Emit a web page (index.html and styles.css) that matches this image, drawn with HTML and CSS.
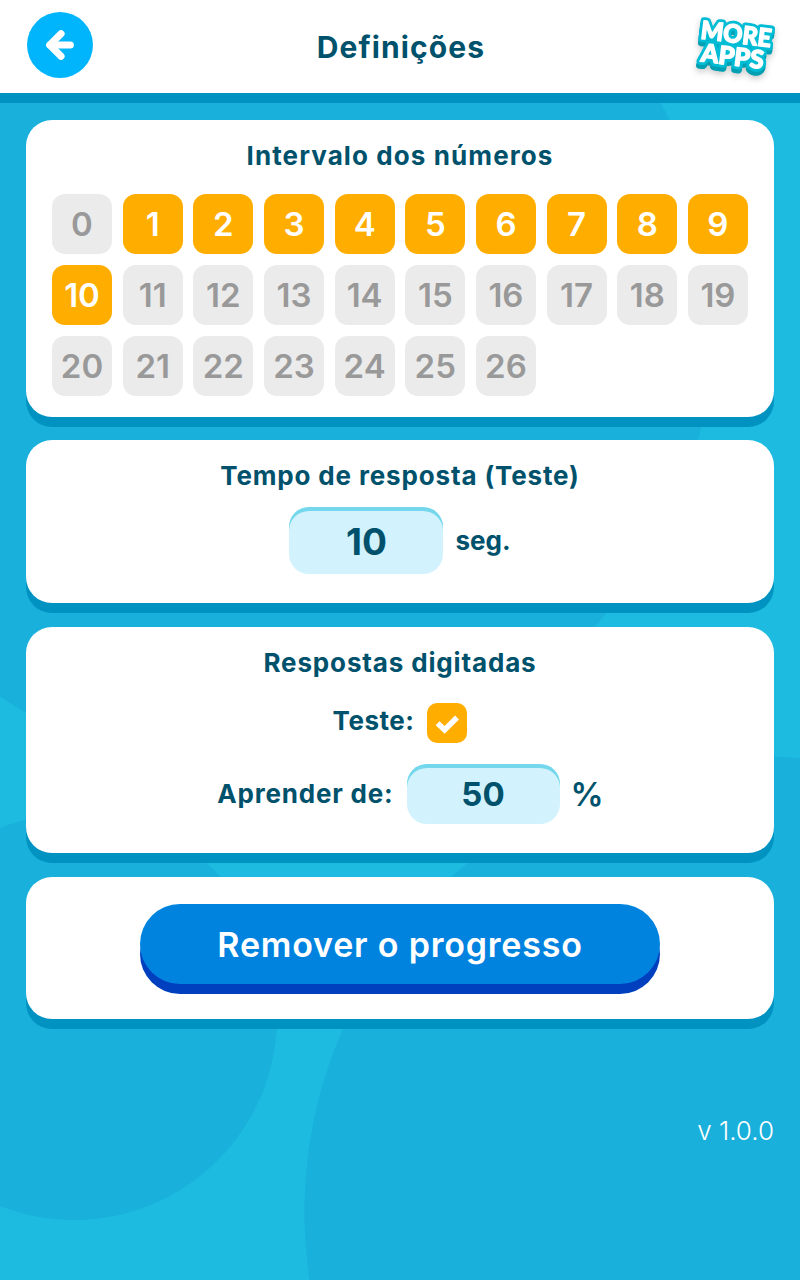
FILE: index.html
```
<!DOCTYPE html>
<html lang="pt">
<head>
    <meta charset="UTF-8">
    <meta name="viewport" content="width=device-width, initial-scale=1.0">
    <title>Definições</title>

    <link rel="stylesheet" href="styles.css">
</head>
<body>
    <header class="header">
        <button type="button" class="back" aria-label="Voltar">
            <svg width="66" height="66" viewBox="0 0 66 66">
                <path d="M34 21.8 L22.8 33 L34 44.2" class="arrow"/>
                <path d="M23 33 H43.3" class="arrow"/>
            </svg>
        </button>
        <h1 class="title">Definições</h1>
        <svg class="more" width="92" height="76" viewBox="0 0 92 76">
            <g transform="rotate(7 46 36)">
                <g class="more-side">
                    <text x="9.5" y="39" textLength="71" lengthAdjust="spacingAndGlyphs">MORE</text>
                    <text x="12.5" y="61.5" textLength="63" lengthAdjust="spacingAndGlyphs">APPS</text>
                </g>
                <g class="more-edge">
                    <text x="9.5" y="35" textLength="71" lengthAdjust="spacingAndGlyphs">MORE</text>
                    <text x="12.5" y="57.5" textLength="63" lengthAdjust="spacingAndGlyphs">APPS</text>
                </g>
                <g class="more-face">
                    <text x="9.5" y="35" textLength="71" lengthAdjust="spacingAndGlyphs">MORE</text>
                    <text x="12.5" y="57.5" textLength="63" lengthAdjust="spacingAndGlyphs">APPS</text>
                </g>
            </g>
        </svg>
    </header>

    <main class="content">
        <section class="card range">
            <h2 class="subtitle intervalo">Intervalo dos números</h2>
            <div class="numbers">
                <div class="number">0</div>
                <div class="number on">1</div>
                <div class="number on">2</div>
                <div class="number on">3</div>
                <div class="number on">4</div>
                <div class="number on">5</div>
                <div class="number on">6</div>
                <div class="number on">7</div>
                <div class="number on">8</div>
                <div class="number on">9</div>
                <div class="number on">10</div>
                <div class="number">11</div>
                <div class="number">12</div>
                <div class="number">13</div>
                <div class="number">14</div>
                <div class="number">15</div>
                <div class="number">16</div>
                <div class="number">17</div>
                <div class="number">18</div>
                <div class="number">19</div>
                <div class="number">20</div>
                <div class="number">21</div>
                <div class="number">22</div>
                <div class="number">23</div>
                <div class="number">24</div>
                <div class="number">25</div>
                <div class="number">26</div>
            </div>
        </section>

        <section class="card time">
            <h2 class="subtitle">Tempo de resposta (Teste)</h2>
            <div class="row">
                <div class="field big">10</div>
                <span class="label seg">seg.</span>
            </div>
        </section>

        <section class="card typed">
            <h2 class="subtitle">Respostas digitadas</h2>
            <div class="row row-test">
                <span class="label teste">Teste:</span>
                <div class="checkbox">
                    <svg width="40" height="40" viewBox="0 0 40 40">
                        <path d="M10.6 20.3 L17.6 26.9 L30 14.5" class="check"/>
                    </svg>
                </div>
            </div>
            <div class="row row-learn">
                <span class="label aprender">Aprender de:</span>
                <div class="field">50</div>
                <span class="percent">%</span>
            </div>
        </section>

        <section class="card reset">
            <button type="button" class="remove">Remover o progresso</button>
        </section>
    </main>

    <footer class="version">v 1.0.0</footer>
</body>
</html>
```
FILE: styles.css
```
* {
    box-sizing: border-box;
}

body {
    margin: 0;
    height: 1280px;
    overflow: hidden;
    font-family: "Inter", sans-serif;
    color: #00526c;
    background-color: #1cbbdf;
    background-image:
        radial-gradient(circle at 257px 318px, #19b0db 457px, transparent 458px),
        radial-gradient(circle at 74px 1017px, #19b0db 202.5px, transparent 203.5px),
        radial-gradient(circle at 760px 1212px, #19b0db 455px, transparent 456px);
}

h1, h2 {
    margin: 0;
    font-weight: 700;
}

.header {
    display: grid;
    grid-template-columns: 92px 1fr 92px;
    align-items: start;
    height: 103px;
    padding: 12px 18px 0 27px;
    background-color: #fff;
    border-bottom: 10px solid #0093c2;
}

.back {
    width: 66px;
    height: 66px;
    padding: 0;
    border: none;
    border-radius: 50%;
    background-color: #00b5fc;
}

.back svg, .checkbox svg {
    display: block;
}

.arrow {
    fill: none;
    stroke: #fff;
    stroke-width: 7.2;
    stroke-linecap: round;
    stroke-linejoin: round;
}

.title {
    padding-right: 7px;
    font-size: 30px;
    line-height: 70px;
    text-align: center;
    letter-spacing: 1.1px;
}

.more {
    margin-top: -4px;
    font-family: "Lato", sans-serif;
    font-size: 25px;
    font-weight: 900;
    filter: drop-shadow(0 3px 3px rgba(0, 0, 0, 0.2));
}

.more text {
    stroke-linejoin: round;
}

.more-side {
    fill: #009fb2;
    stroke: #009fb2;
    stroke-width: 7;
}

.more-edge {
    fill: #00bcd4;
    stroke: #00bcd4;
    stroke-width: 7;
}

.more-face {
    fill: #fff;
    stroke: #fff;
    stroke-width: 1.4;
}

.content {
    display: flex;
    flex-direction: column;
    padding: 17px 26px 0;
}

.card {
    padding: 0 26px;
    border-radius: 26px;
    background-color: #fff;
    box-shadow: 0 10px 0 #0093c2;
}

.range {
    height: 297px;
    margin-bottom: 23px;
}

.time {
    height: 163px;
    margin-bottom: 24px;
}

.typed {
    height: 226px;
    margin-bottom: 24px;
}

.subtitle {
    padding-top: 19px;
    font-size: 26px;
    line-height: 34px;
    text-align: center;
    letter-spacing: 0.85px;
}

.intervalo {
    letter-spacing: 1.1px;
}

.numbers {
    display: grid;
    grid-template-columns: repeat(10, 60px);
    justify-content: space-between;
    row-gap: 11px;
    margin-top: 21px;
}

.number {
    height: 60px;
    border-radius: 13px;
    background-color: #ebebeb;
    color: #999;
    font-size: 33px;
    font-weight: 600;
    line-height: 61px;
    text-align: center;
}

.number.on {
    background-color: #ffae00;
    color: #fff;
}

.row {
    display: flex;
    justify-content: center;
    align-items: center;
}

.time .row {
    margin-top: 14px;
}

.field {
    width: 153px;
    height: 60px;
    border-radius: 20px;
    background-color: #d2f3fe;
    box-shadow: inset 0 4px 0 #74d7ec;
    font-size: 33px;
    font-weight: 700;
    line-height: 61px;
    text-align: center;
}

.field.big {
    width: 154px;
    height: 67px;
    font-size: 37px;
    line-height: 69px;
}

.label {
    font-size: 26px;
    font-weight: 700;
}

.seg {
    margin-left: 12px;
}

.row-test {
    height: 40px;
    margin-top: 23px;
}

.teste {
    margin: -5px 13px 0 0;
    letter-spacing: 0.5px;
}

.checkbox {
    width: 40px;
    height: 40px;
    border-radius: 10px;
    background-color: #ffae00;
}

.check {
    fill: none;
    stroke: #fff;
    stroke-width: 5.6;
}

.row-learn {
    margin-top: 21px;
    padding-left: 21px;
}

.aprender {
    margin: -2px 13px 0 0;
    letter-spacing: 0.8px;
}

.percent {
    margin-left: 11px;
    font-size: 33px;
    font-weight: 600;
}

.reset {
    display: flex;
    justify-content: center;
    height: 142px;
    padding-top: 27px;
}

.remove {
    width: 520px;
    height: 80px;
    padding: 0;
    border: none;
    border-radius: 40px;
    background-color: #0083df;
    box-shadow: 0 10px 0 #0040bf;
    color: #fff;
    font-family: inherit;
    font-size: 34px;
    font-weight: 600;
    letter-spacing: 0.8px;
}

.version {
    padding: 96px 26px 0;
    color: #fff;
    font-size: 26px;
    font-weight: 300;
    text-align: right;
}
```
